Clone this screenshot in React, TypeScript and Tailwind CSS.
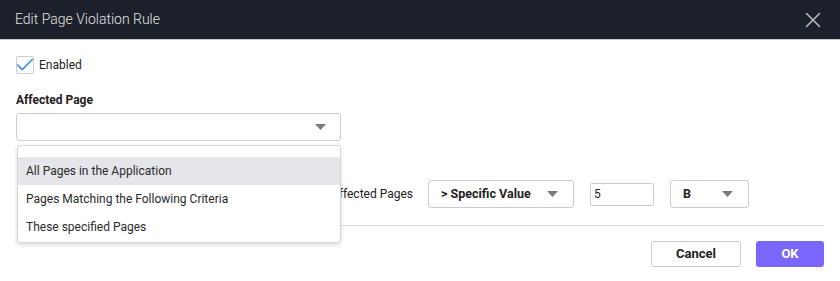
import { Check, X } from "lucide-react";

function Caret() {
  return (
    <svg width="11" height="6" viewBox="0 0 11 6" className="shrink-0">
      <path d="M0 0 H11 L5.5 6 Z" fill="#7a7a7a" />
    </svg>
  );
}

export default function App() {
  return (
    <div className="w-[840px] h-[281px] bg-white font-['Roboto',sans-serif] text-[#222] relative overflow-hidden">
      {/* header */}
      <div className="h-[40px] bg-[#1b202b] border-b border-[#c9c9c9] flex items-center justify-between pl-[15px] pr-[14px]">
        <h1 className="text-[14px] text-[#e2e2e2] font-light">
          Edit Page Violation Rule
        </h1>
        <X className="w-[26px] h-[26px] text-[#b9b9b9]" strokeWidth={1.4} />
      </div>

      <div className="px-[16px] pt-[16px]">
        <label className="flex items-center gap-[5px] h-[18px]">
          <span className="w-[18px] h-[18px] border border-[#cfcfcf] rounded-[2px] flex items-center justify-center">
            <Check className="w-[22px] h-[22px] shrink-0 text-[#3d8af7]" strokeWidth={1.8} />
          </span>
          <span className="text-[12px]">Enabled</span>
        </label>

        <div className="mt-[18px] text-[12px] leading-[16px] font-bold">
          Affected Page
        </div>

        <div className="relative mt-[5px] w-[325px]">
          <div className="h-[28px] border border-[#cdcdcd] rounded-[3px] flex items-center justify-end pr-[14px]">
            <Caret />
          </div>

          {/* open menu */}
          <div className="absolute z-10 left-[1px] top-[32px] w-[324px] bg-white rounded-[3px] border border-[#d6d6d6] shadow-[0_2px_4px_rgba(0,0,0,0.15)] pt-[11px] pb-[1px] text-[12px] text-[#2a2a2a]">
            <div className="h-[28px] flex items-center pl-[8px] bg-[#e4e6ea]">All Pages in the Application</div>
            <div className="h-[28px] flex items-center pl-[8px]">Pages Matching the Following Criteria</div>
            <div className="h-[28px] flex items-center pl-[8px]">These specified Pages</div>
          </div>
        </div>

        {/* threshold row */}
        <div className="mt-[39px] flex items-center h-[28px] text-[12px]">
          <span className="w-[397px] text-right">Alert when the Number of Affected Pages</span>
          <div className="ml-[15px] w-[146px] h-[28px] border border-[#cdcdcd] rounded-[3px] flex items-center justify-between pl-[12px] pr-[15px] text-[12.5px] font-bold">
            {"> Specific Value"}
            <Caret />
          </div>
          <input
            readOnly
            value="5"
            className="ml-[16px] w-[64px] h-[23px] border border-[#cdcdcd] rounded-[2px] px-[3px] text-[12px] outline-none"
          />
          <div className="ml-[16px] w-[79px] h-[28px] border border-[#cdcdcd] rounded-[3px] flex items-center justify-between pl-[12px] pr-[15px] text-[12.5px] font-bold">
            B
            <Caret />
          </div>
        </div>

        <div className="mt-[17px] border-t border-[#dcdcdc]" />

        <div className="mt-[15px] flex justify-end gap-[15px] text-[13px] font-bold">
          <button className="w-[90px] h-[26px] border border-[#cdcdcd] rounded-[3px] bg-white text-[#222]">Cancel</button>
          <button className="w-[68px] h-[26px] rounded-[3px] bg-[#7b66fb] text-white">OK</button>
        </div>
      </div>
    </div>
  );
}
